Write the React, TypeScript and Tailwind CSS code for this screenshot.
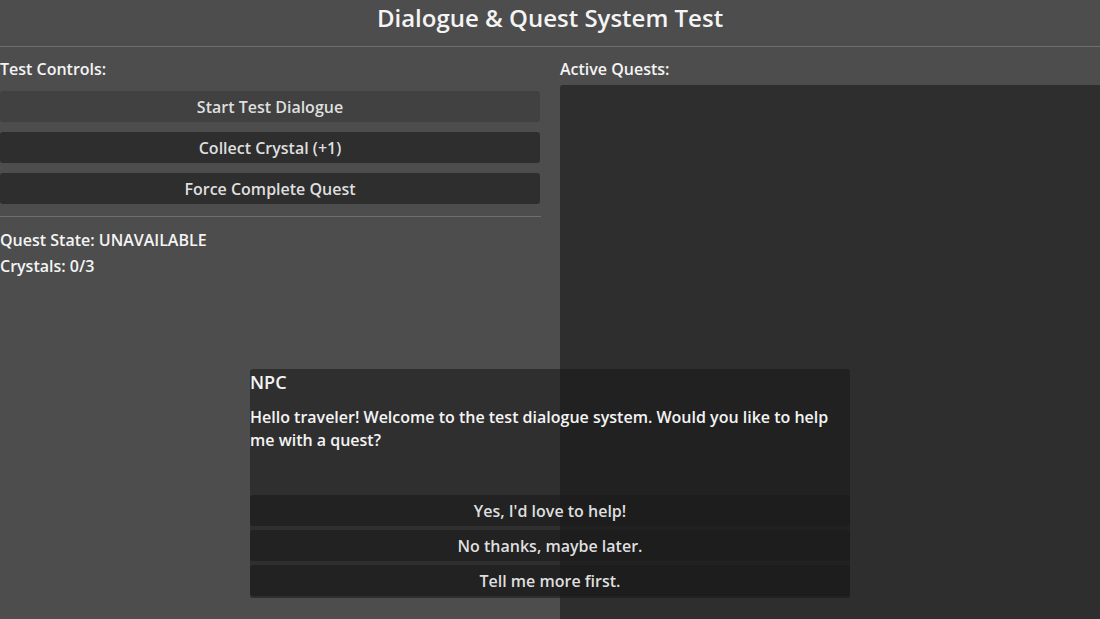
import React from "react";

// 테스트 화면: 대화 & 퀘스트 시스템
const controlButtons = [
  { label: "Start Test Dialogue", hovered: true },
  { label: "Collect Crystal (+1)", hovered: false },
  { label: "Force Complete Quest", hovered: false },
];

const choices = ["Yes, I'd love to help!", "No thanks, maybe later.", "Tell me more first."];

function GodotButton({ label, hovered }: { label: string; hovered?: boolean }) {
  return (
    <div
      className={
        "h-[31px] flex items-center justify-center rounded-[3px] text-[16px] text-[#dfdfdf] " +
        (hovered ? "bg-[#414141]" : "bg-[#2e2e2e]")
      }
    >
      {label}
    </div>
  );
}

export default function App() {
  return (
    <div
      className="relative w-[1100px] h-[619px] overflow-hidden bg-[#4d4d4d] text-[#f4f4f4] font-semibold"
      style={{ fontFamily: '"Open Sans", "Noto Sans", sans-serif' }}
    >
      {/* 제목 */}
      <div className="h-[35px] flex items-center justify-center text-[24px] leading-[33px]">
        Dialogue &amp; Quest System Test
      </div>
      <div className="mt-[11px] h-px bg-[#6e6e6e]" />

      <div className="flex gap-[20px] mt-[11px] h-[561px]">
        {/* 왼쪽: 테스트 컨트롤 */}
        <div className="w-[540px] flex flex-col">
          <div className="h-[23px] leading-[23px] text-[16px]">Test Controls:</div>
          <div className="mt-[10px] flex flex-col gap-[10px]">
            {controlButtons.map((b) => (
              <GodotButton key={b.label} label={b.label} hovered={b.hovered} />
            ))}
          </div>
          <div className="mt-[12px] h-px bg-[#6e6e6e] w-[541px]" />
          <div className="mt-[10px] text-[16px] leading-[26px]">
            <div>Quest State: UNAVAILABLE</div>
            <div>Crystals: 0/3</div>
          </div>
        </div>

        {/* 오른쪽: 활성 퀘스트 */}
        <div className="flex-1 flex flex-col">
          <div className="h-[23px] leading-[23px] text-[16px]">Active Quests:</div>
          <div className="mt-[4px] flex-1 bg-[#2e2e2e] rounded-tl-[3px]" />
        </div>
      </div>

      {/* 대화 상자 (오버레이) */}
      <div className="absolute left-[250px] top-[369px] w-[600px] h-[229px] bg-[rgba(24,24,24,0.55)] rounded-[3px] flex flex-col">
        <div className="pt-[1px] text-[18px] leading-[25px]">NPC</div>
        <div className="mt-[11px] text-[16px] leading-[23px] pr-[10px]">
          Hello traveler! Welcome to the test dialogue system. Would you like to help me with a quest?
        </div>
        <div className="mt-auto mb-[2px] flex flex-col gap-[4px]">
          {choices.map((c) => (
            <div
              key={c}
              className="h-[31px] flex items-center justify-center rounded-[3px] bg-[rgba(26,26,26,0.6)] text-[16px] text-[#dfdfdf]"
            >
              {c}
            </div>
          ))}
        </div>
      </div>
    </div>
  );
}
